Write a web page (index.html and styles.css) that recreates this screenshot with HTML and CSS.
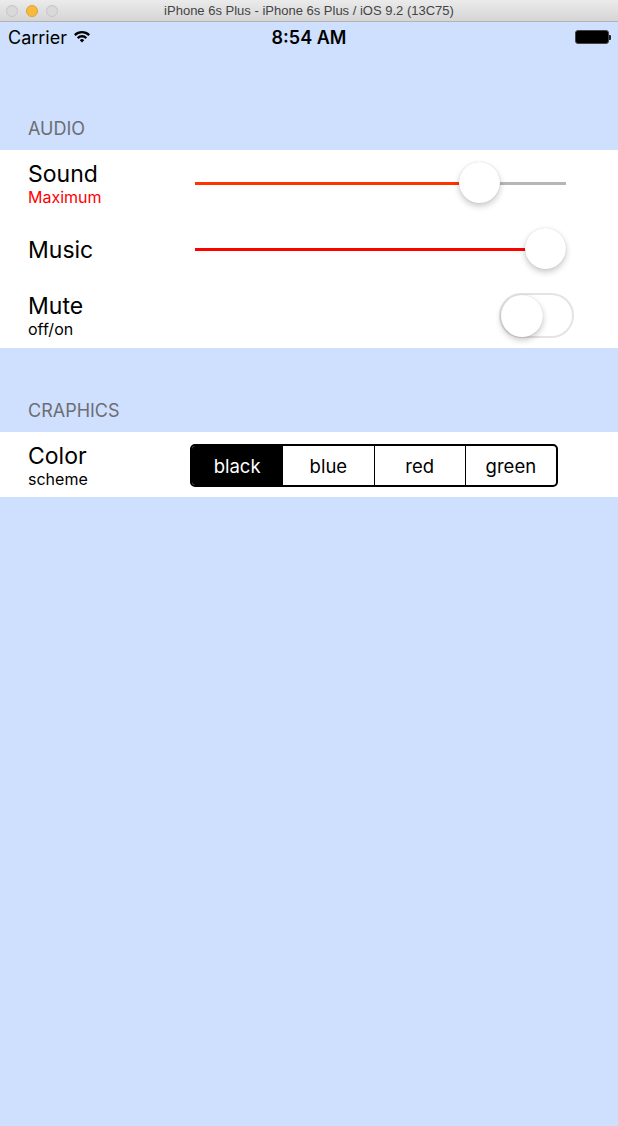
FILE: index.html
```html
<!DOCTYPE html>
<html>
<head>
<meta charset="utf-8">
<link rel="stylesheet" href="styles.css">
</head>
<body>
<div class="titlebar">
  <div class="lights">
    <span class="light gray"></span>
    <span class="light orange"></span>
    <span class="light gray"></span>
  </div>
  <div class="title">iPhone 6s Plus - iPhone 6s Plus / iOS 9.2 (13C75)</div>
  <div></div>
</div>
<div class="statusbar">
  <div class="carrier">Carrier
    <svg class="wifi" width="18" height="14" viewBox="0 0 18 14">
      <path d="M1 5.2 A11.5 11.5 0 0 1 17 5.2 L15.4 6.9 A9.2 9.2 0 0 0 2.6 6.9 Z" fill="#000"/>
      <path d="M3.9 8.2 A7.3 7.3 0 0 1 14.1 8.2 L12.5 9.9 A5 5 0 0 0 5.5 9.9 Z" fill="#000"/>
      <path d="M6.8 11.2 A3.1 3.1 0 0 1 11.2 11.2 L9 13.6 Z" fill="#000"/>
    </svg>
  </div>
  <div class="time">8:54 AM</div>
  <div class="battery"><span class="batt-body"></span><span class="batt-nub"></span></div>
</div>

<div class="group-header first">AUDIO</div>
<div class="rows">
  <div class="row">
    <div class="label">
      <div class="main">Sound</div>
      <div class="sub red">Maximum</div>
    </div>
    <div class="slider orange" style="--v:0.8">
      <div class="track"><div class="fill"></div><div class="rest"></div></div>
      <div class="thumb"></div>
    </div>
  </div>
  <div class="row">
    <div class="label">
      <div class="main">Music</div>
    </div>
    <div class="slider" style="--v:1">
      <div class="track"><div class="fill"></div><div class="rest"></div></div>
      <div class="thumb"></div>
    </div>
  </div>
  <div class="row">
    <div class="label">
      <div class="main">Mute</div>
      <div class="sub">off/on</div>
    </div>
    <div class="switch"><div class="knob"></div></div>
  </div>
</div>

<div class="group-header second">CRAPHICS</div>
<div class="rows">
  <div class="row last">
    <div class="label">
      <div class="main">Color</div>
      <div class="sub">scheme</div>
    </div>
    <div class="segmented">
      <div class="seg active">black</div>
      <div class="seg">blue</div>
      <div class="seg">red</div>
      <div class="seg">green</div>
    </div>
  </div>
</div>
</body>
</html>
```
FILE: styles.css
```css
html, body {
  margin: 0;
  padding: 0;
}
body {
  background: #cee0fd;
  font-family: Inter, "Liberation Sans", sans-serif;
  color: #000;
  width: 618px;
  min-height: 1126px;
}
.titlebar {
  height: 22px;
  box-sizing: border-box;
  background: linear-gradient(#ebebeb, #d5d5d5);
  border-bottom: 1px solid #b4b4b4;
  display: grid;
  grid-template-columns: 1fr auto 1fr;
  align-items: center;
}
.lights {
  display: flex;
  gap: 8px;
  padding-left: 6px;
}
.light {
  width: 12px;
  height: 12px;
  border-radius: 50%;
  box-sizing: border-box;
}
.light.gray {
  background: #d9d9d9;
  border: 1px solid #c6c6c6;
}
.light.orange {
  background: #f6bb3e;
  border: 1px solid #dea236;
}
.title {
  font-family: "Liberation Sans", sans-serif;
  font-size: 13px;
  color: #444;
  line-height: 22px;
}
.statusbar {
  height: 30px;
  display: grid;
  grid-template-columns: 1fr auto 1fr;
  align-items: center;
  font-size: 18px;
}
.carrier {
  padding-left: 8px;
  display: flex;
  align-items: center;
  gap: 6px;
}
.wifi {
  margin-top: -2px;
}
.time {
  font-weight: 600;
}
.battery {
  justify-self: end;
  margin-right: 7px;
  display: flex;
  align-items: center;
}
.batt-body {
  width: 34px;
  height: 14px;
  box-sizing: border-box;
  background: #000;
  border: 1px solid #444;
  border-radius: 3px;
}
.batt-nub {
  width: 2px;
  height: 5px;
  background: #222;
  border-radius: 0 1px 1px 0;
}
.group-header {
  display: flex;
  align-items: flex-end;
  box-sizing: border-box;
  padding: 0 0 10px 28px;
  font-size: 18px;
  line-height: 22px;
  color: #6d6d72;
}
.group-header.first {
  height: 98px;
}
.group-header.second {
  height: 84px;
}
.rows {
  background: #fff;
}
.row {
  height: 66px;
  display: flex;
  align-items: center;
}
.row.last {
  height: 65px;
}
.label {
  width: 162px;
  padding-left: 28px;
  padding-top: 2px;
  box-sizing: border-box;
  display: flex;
  flex-direction: column;
}
.main {
  font-size: 23px;
  line-height: 26px;
}
.sub {
  font-size: 16px;
  line-height: 19px;
  margin-top: 1px;
}
.sub.red {
  color: #ff0000;
}
.slider {
  --w: 371px;
  --t: 41px;
  position: relative;
  width: var(--w);
  height: 44px;
  margin-left: 33px;
  display: flex;
  align-items: center;
}
.track {
  width: 100%;
  height: 3px;
  display: flex;
}
.fill {
  width: calc(var(--v) * (var(--w) - var(--t)) + var(--t) / 2);
  background: #ff0000;
}
.slider.orange .fill {
  background: #ff3300;
}
.rest {
  flex: 1;
  background: #b6b6b6;
}
.thumb {
  position: absolute;
  top: 1px;
  left: calc(var(--v) * (var(--w) - var(--t)));
  width: var(--t);
  height: var(--t);
  border-radius: 50%;
  background: #fff;
  box-shadow: 0 3px 6px rgba(0, 0, 0, 0.22), 0 0 1px rgba(0, 0, 0, 0.18);
}
.switch {
  margin-left: auto;
  margin-right: 44px;
  margin-top: 1px;
  width: 75px;
  height: 45px;
  box-sizing: border-box;
  border: 2px solid #e4e4e4;
  border-radius: 23px;
  background: #fff;
  display: flex;
  align-items: center;
}
.knob {
  width: 42px;
  height: 42px;
  margin-left: 0;
  border-radius: 50%;
  background: #fff;
  box-shadow: 0 3px 6px rgba(0, 0, 0, 0.22), 0 0 1px rgba(0, 0, 0, 0.2);
}
.segmented {
  margin-left: 28px;
  width: 368px;
  height: 43px;
  box-sizing: border-box;
  border: 2px solid #000;
  border-radius: 5px;
  display: flex;
  overflow: hidden;
  margin-top: 2px;
}
.seg {
  flex: 1;
  display: flex;
  align-items: center;
  justify-content: center;
  font-size: 18.5px;
  border-left: 1.5px solid #000;
}
.seg:first-child {
  border-left: none;
}
.seg.active {
  background: #000;
  color: #fff;
}
```
